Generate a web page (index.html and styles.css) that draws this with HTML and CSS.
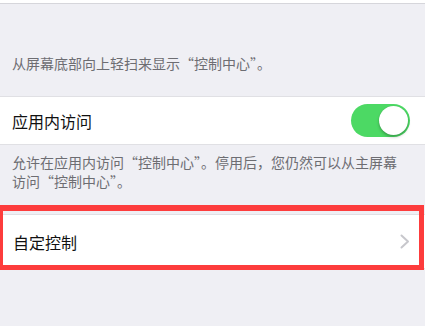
FILE: index.html
```html
<!DOCTYPE html>
<html lang="zh-CN">
<head>
<meta charset="utf-8">
<link rel="stylesheet" href="styles.css">
</head>
<body>
<div class="page">
  <div class="top-cell"></div>
  <p class="footer-text first">从屏幕底部向上轻扫来显示“控制中心”。</p>
  <div class="row">
    <span class="title">应用内访问</span>
    <span class="switch"><span class="knob"></span></span>
  </div>
  <p class="footer-text second">允许在应用内访问“控制中心”。停用后，您仍然可以从主屏幕访问“控制中心”。</p>
  <div class="row link">
    <span class="title">自定控制</span>
    <svg class="chevron" width="10" height="15" viewBox="0 0 10 15"><path d="M1.5 1.5 L8 7.5 L1.5 13.5" fill="none" stroke="#c7c7cc" stroke-width="2" stroke-linecap="round" stroke-linejoin="round"/></svg>
  </div>
  <div class="highlight"></div>
</div>
</body>
</html>
```

FILE: styles.css
```css
html, body {
  margin: 0;
  padding: 0;
}
body {
  background: #efeff4;
  font-family: "Noto Sans CJK SC", "Noto Sans", sans-serif;
  width: 425px;
  height: 326px;
  overflow: hidden;
}
.page {
  position: relative;
  height: 326px;
}
.top-cell {
  height: 3px;
  background: #fff;
  border-bottom: 1px solid #d6d6db;
}
.footer-text {
  margin: 0;
  color: #6d6d72;
  font-size: 14px;
  line-height: 19px;
  padding: 0 18px 0 12px;
}
.footer-text.first {
  padding-top: 50px;
  padding-bottom: 23px;
}
.footer-text.second {
  padding-top: 8px;
  padding-bottom: 23px;
}
.row {
  background: #fff;
  height: 47px;
  display: flex;
  align-items: center;
  justify-content: space-between;
  padding: 0 15px 0 12px;
  border-top: 1px solid #e0e0e4;
  border-bottom: 1px solid #e0e0e4;
}
.row.link {
  height: 53px;
  padding-left: 13px;
}
.title {
  font-size: 16px;
  color: #111;
}
.switch {
  width: 59px;
  height: 33px;
  border-radius: 17px;
  background: #4cd964;
  display: flex;
  align-items: center;
  justify-content: flex-end;
  padding: 0 2px;
  box-sizing: border-box;
}
.knob {
  width: 29px;
  height: 29px;
  border-radius: 50%;
  background: #fff;
  box-shadow: 0 2px 3px rgba(0,0,0,0.25), 0 0 1px rgba(0,0,0,0.15);
}
.chevron {
  margin-right: 0;
}
.highlight {
  position: absolute;
  left: 0;
  top: 205px;
  width: 424px;
  height: 65px;
  box-sizing: border-box;
  border: 5px solid #fd3c3c;
  border-left-width: 3px;
  border-top-width: 6px;
}
```
